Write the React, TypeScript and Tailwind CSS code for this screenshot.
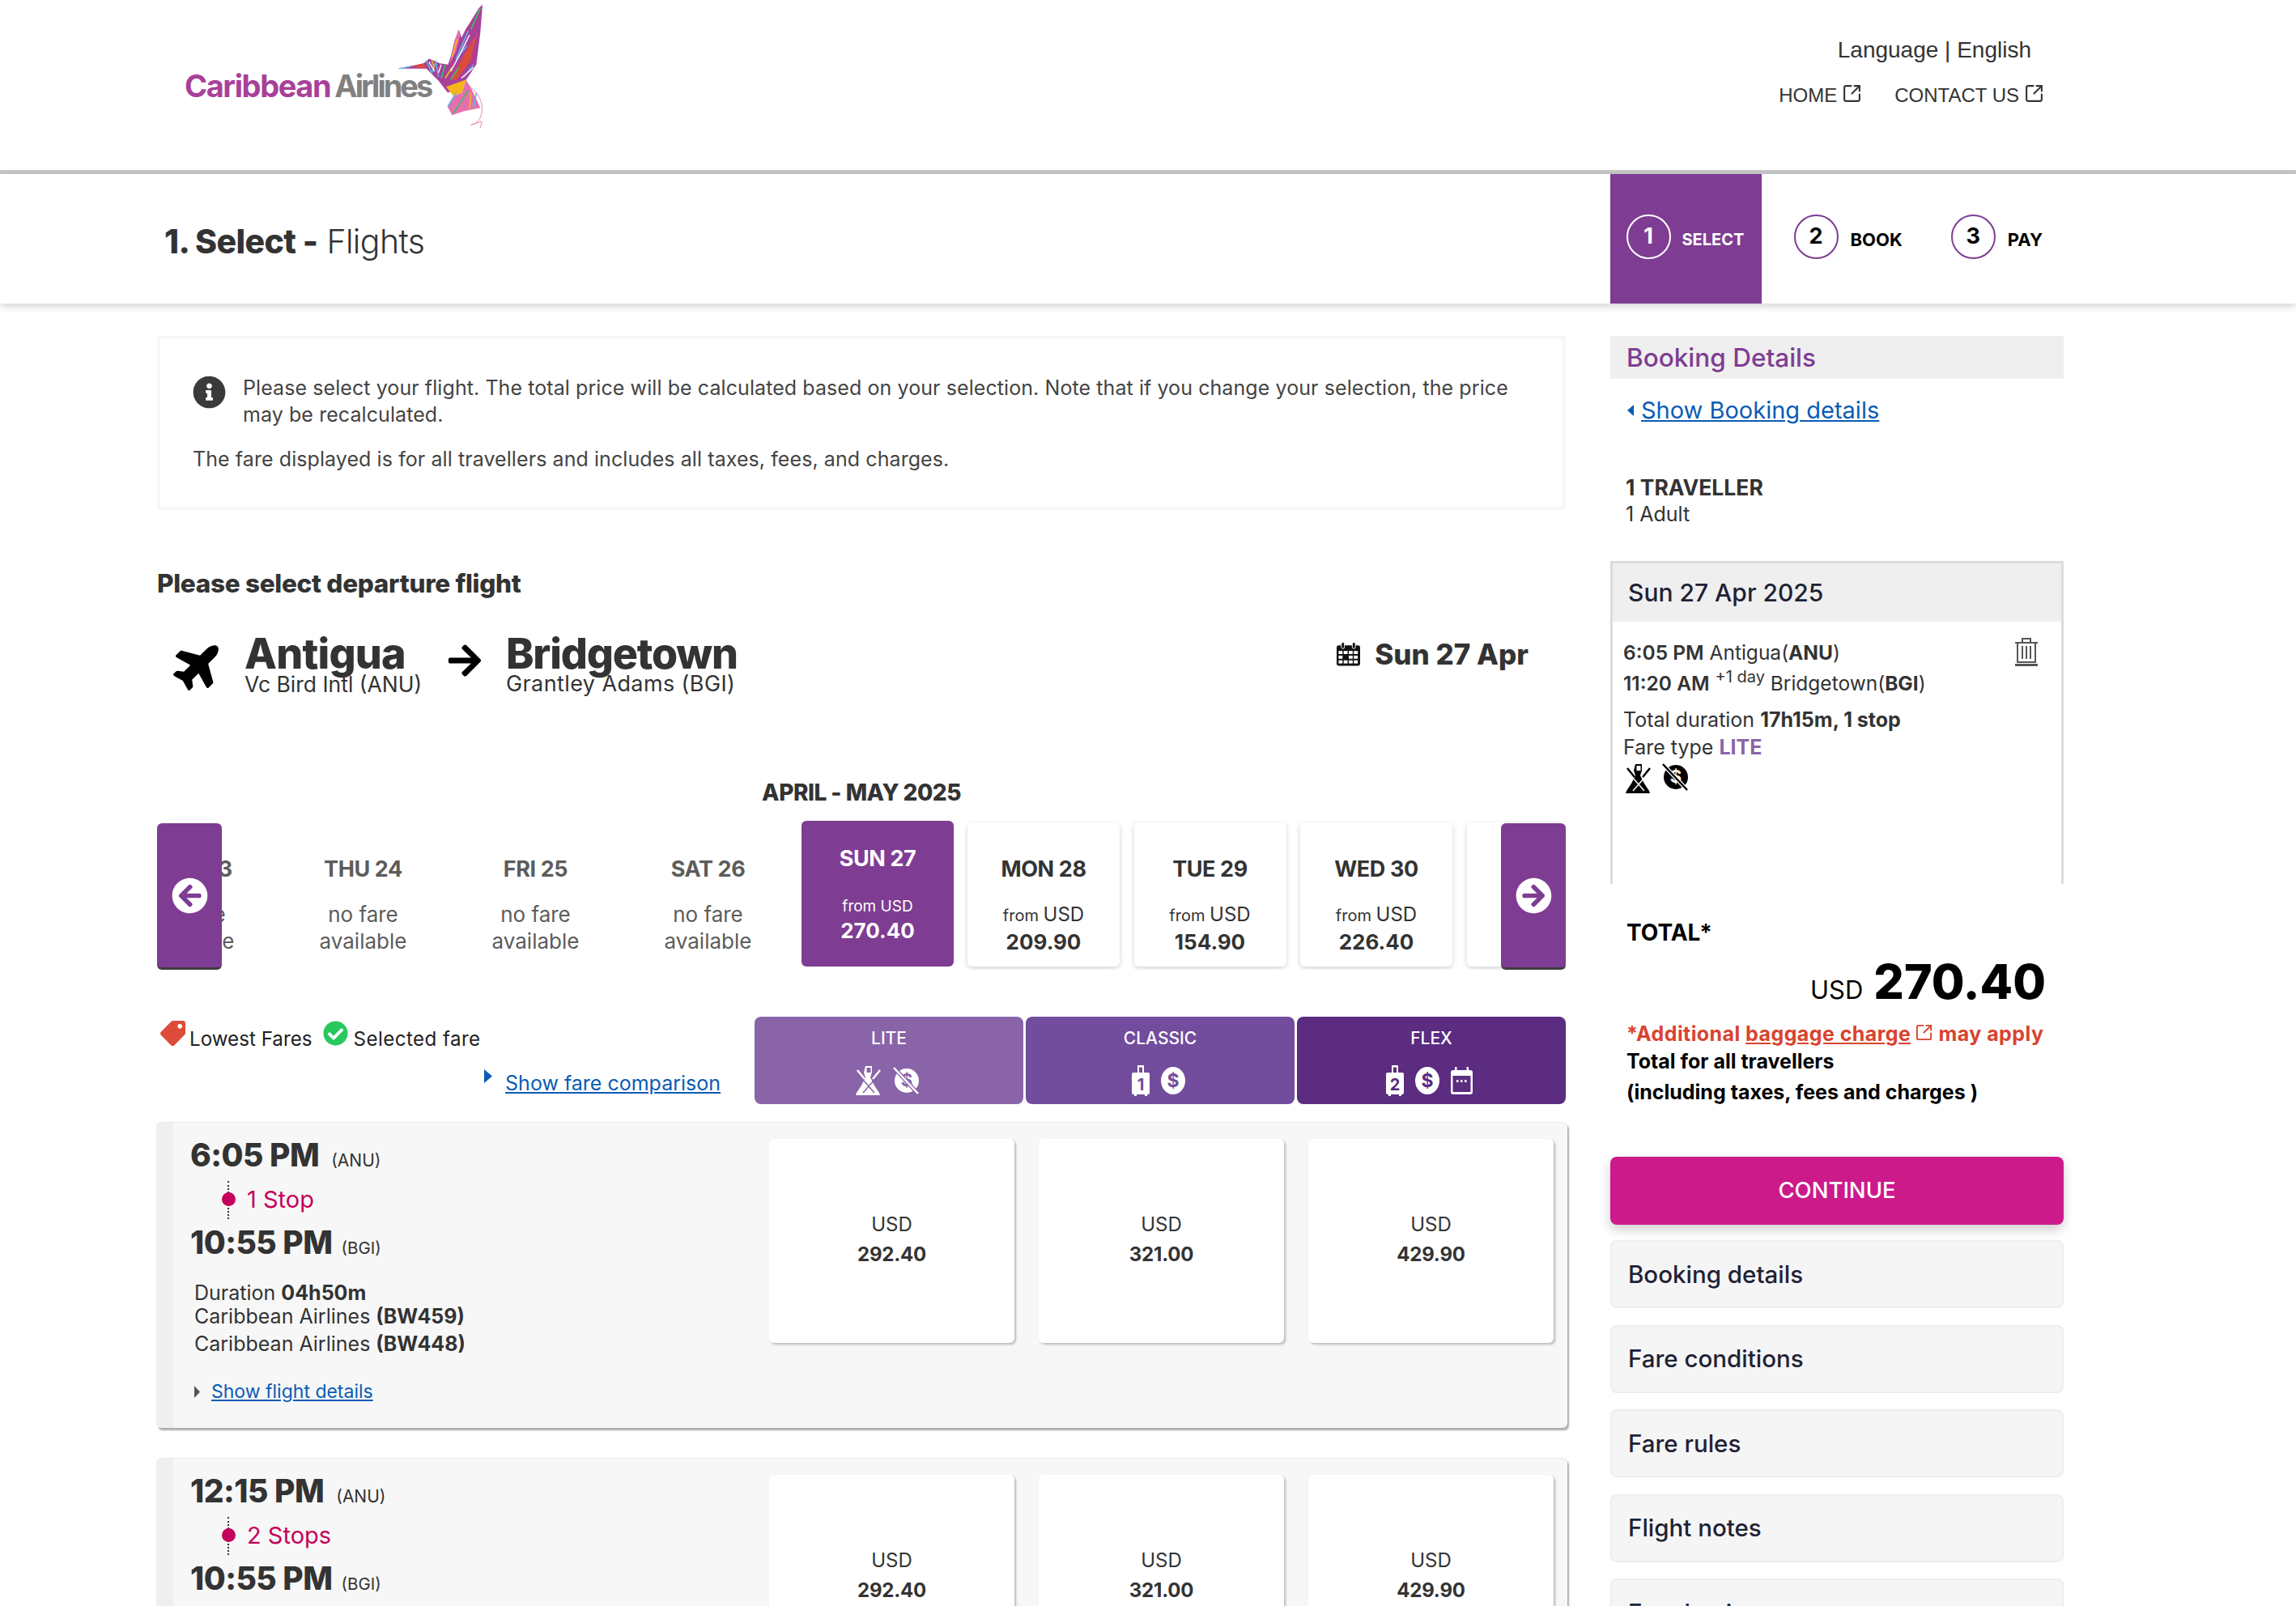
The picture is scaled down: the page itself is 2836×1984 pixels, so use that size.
import React from "react";
import { FaInfoCircle, FaPlane, FaArrowRight, FaArrowCircleLeft, FaArrowCircleRight, FaTag, FaCheckCircle } from "react-icons/fa";
import { SquareArrowOutUpRight } from "lucide-react";

function Bird() {
  return (
    <svg viewBox="930 10 330 470" className="w-[110px] h-[157px] -ml-[42px] mt-[3px] shrink-0">
      <path fill="#a8409a" d="M1248 18L1235 30 1210 70 1185 110 1170 140 1160 110 1145 150 1130 210 1120 240 1090 235 1050 218 1030 235 938 255 1040 255 1085 300 1120 345 1185 300 1225 240 1240 120Z" />
      <path fill="#e56fae" d="M1160 110L1145 150 1125 240 1150 190 1165 130Z" />
      <path fill="#dd4b39" d="M1228 125L1205 225 1150 297 1132 292 1182 200Z" />
      <path fill="#dd4b39" d="M985 246L1030 235 1040 255Z" />
      <path fill="#f4b41a" d="M1113 322L1187 295 1172 345 1140 357Z" />
      <path fill="#e56fae" d="M1187 297L1205 325 1240 400 1180 412 1135 427 1118 395 1140 357 1172 345Z" />
      <path fill="none" stroke="#5fb3e6" strokeWidth="4" d="M938 255L985 246" />
      <path fill="none" stroke="#3fbf5f" strokeWidth="5" d="M1240 30L1205 110M1110 240L1095 290M1195 335L1140 420M1160 250L1130 295" />
      <path fill="none" stroke="#5fb3e6" strokeWidth="5" d="M1195 115L1150 220 1190 170M1040 225L1060 270 1075 230 1085 285M1150 345L1120 395M1225 345L1215 400M1215 240L1180 285" />
      <path fill="none" stroke="#f4b41a" strokeWidth="5" d="M1155 145L1135 210M1110 290L1135 250M1205 345L1200 405M1060 225L1070 255" />
      <path fill="none" stroke="#ffffff" strokeWidth="4" d="M1200 130L1160 210 1130 265M1215 250L1170 290M1050 230L1070 265M1095 240L1085 270" />
      <path fill="none" stroke="#e56fae" strokeWidth="2.5" d="M1205 325C1240 350 1258 400 1238 440 1230 455 1215 462 1205 463L1245 450 1240 475" />
    </svg>
  );
}

function Tri({ left, w, h, c }: { left?: boolean; w: string; h: string; c: string }) {
  return (
    <svg viewBox="0 0 10 17" preserveAspectRatio="none" className={"shrink-0 " + w + " " + h} fill={c}>
      <path d={left ? "M10 0L0 8.5 10 17z" : "M0 0l10 8.5L0 17z"} />
    </svg>
  );
}

function NoBag({ c, k }: { c: string; k: string }) {
  return (
    <svg viewBox="0 0 32 38" className="w-[32px] h-[38px]">
      <path fill={c} d="M12 1h8v8l-2 6 5 10 6 9 1 3H0l1-3 6-9 5-10-2-6z" />
      <rect x="13.5" y="3" width="5" height="6" fill={k} />
      <path stroke={c} strokeWidth="2.5" d="M2 6l9 11M30 6l-9 11" />
      <path stroke={k} strokeWidth="1.5" d="M9 18l14 16M23 18L9 34" />
    </svg>
  );
}
function NoDollar({ c, k }: { c: string; k: string }) {
  return (
    <svg viewBox="0 0 32 34" className="w-[32px] h-[34px]">
      <circle cx="17" cy="17" r="15" fill={c} />
      <text x="17" y="24" textAnchor="middle" fontSize="22" fontWeight="700" fontFamily="Inter,sans-serif" fill={k}>$</text>
      <path stroke={k} strokeWidth="5" d="M1 1l30 32" />
      <path stroke={c} strokeWidth="2.5" d="M1 1l30 32" />
    </svg>
  );
}
function Bag({ c, k, n }: { c: string; k: string; n: string }) {
  return (
    <svg viewBox="0 0 22 38" className="w-[22px] h-[38px]">
      <path fill={c} d="M7 0h8v9h5a2 2 0 0 1 2 2v23a2 2 0 0 1-2 2h-1v2h-3v-2H6v2H3v-2H2a2 2 0 0 1-2-2V11a2 2 0 0 1 2-2h5z" />
      <rect x="9" y="2.5" width="4" height="6.5" fill={k} />
      <text x="11" y="31" textAnchor="middle" fontSize="20" fontWeight="700" fontFamily="Inter,sans-serif" fill={k}>{n}</text>
    </svg>
  );
}
function Dollar({ c, k }: { c: string; k: string }) {
  return (
    <svg viewBox="0 0 30 34" className="w-[30px] h-[34px]">
      <ellipse cx="15" cy="17" rx="15" ry="17" fill={c} />
      <text x="15" y="25" textAnchor="middle" fontSize="23" fontWeight="700" fontFamily="Inter,sans-serif" fill={k}>$</text>
    </svg>
  );
}
function Cal({ c, k }: { c: string; k: string }) {
  return (
    <svg viewBox="0 0 27 34" className="w-[27px] h-[34px]">
      <rect x="0" y="4" width="27" height="30" rx="3" fill={c} />
      <rect x="5" y="0" width="2.5" height="6" fill={c} />
      <rect x="19.5" y="0" width="2.5" height="6" fill={c} />
      <rect x="2.5" y="11" width="22" height="20" fill={k} />
      <rect x="7" y="16" width="2.5" height="3" fill={c} />
      <rect x="12" y="16" width="2.5" height="3" fill={c} />
      <rect x="17" y="16" width="2.5" height="3" fill={c} />
    </svg>
  );
}
function GridCal() {
  return (
    <svg viewBox="0 0 30 30" className="w-[29px] h-[30px]">
      <rect x="0" y="4" width="30" height="26" rx="2.5" fill="#111" />
      <rect x="6" y="0" width="4" height="8" rx="2" fill="#111" stroke="#fff" strokeWidth="1" />
      <rect x="20" y="0" width="4" height="8" rx="2" fill="#111" stroke="#fff" strokeWidth="1" />
      <g fill="#fff">
        <rect x="2.5" y="11" width="5" height="4" /><rect x="9" y="11" width="5" height="4" /><rect x="15.5" y="11" width="5" height="4" /><rect x="22" y="11" width="5" height="4" />
        <rect x="2.5" y="17" width="5" height="4" /><rect x="15.5" y="17" width="5" height="4" /><rect x="22" y="17" width="5" height="4" />
        <rect x="2.5" y="23" width="5" height="4" /><rect x="9" y="23" width="5" height="4" /><rect x="15.5" y="23" width="5" height="4" /><rect x="22" y="23" width="5" height="4" />
      </g>
    </svg>
  );
}
function Trash() {
  return (
    <svg viewBox="0 0 28 36" className="w-[28px] h-[36px]" fill="none" stroke="#555" strokeWidth="2">
      <path d="M0 7h28M9 6V2h10v4M3 7v24h22V7M9 11v16M14 11v16M19 11v16" />
      <path strokeWidth="3" d="M0 34.5h28" />
    </svg>
  );
}

function Step({ n, label, active }: { n: string; label: string; active?: boolean }) {
  return (
    <div className={active ? "w-[187px] h-[160px] bg-[#7e3d92] text-white flex items-start pl-[20px] pt-[50px] gap-[14px]" : "flex items-start pt-[50px] gap-[15px] text-black"}>
      <div className={active ? "w-[55px] h-[55px] rounded-full border-2 border-white flex items-center justify-center text-[27px] font-bold" : "w-[55px] h-[55px] rounded-full border-2 border-[#7e3d92] flex items-center justify-center text-[27px] font-bold"}>{n}</div>
      <div className={active ? "text-[20px] font-bold leading-[55px] mt-[4px]" : "text-[22px] font-bold leading-[55px] mt-[4px]"}>{label}</div>
    </div>
  );
}

function NoFare({ day }: { day: string }) {
  return (
    <div className="w-[213px] shrink-0 text-center text-[#5c5c5c] pt-[40px]">
      <div className="text-[27px] font-bold leading-[40px] tracking-[-0.4px]">{day}</div>
      <div className="text-[26px] leading-[33px] mt-[19px]">no fare<br />available</div>
    </div>
  );
}

function PriceDay({ day, price }: { day: string; price: string }) {
  return (
    <div className="w-[188px] h-[178px] mt-[2px] shrink-0 bg-white rounded-[6px] shadow-[0_2px_6px_rgba(0,0,0,0.18)] text-center text-[#333] pt-[38px]">
      <div className="text-[27px] font-bold leading-[40px] tracking-[-0.4px]">{day}</div>
      <div className="leading-[30px] mt-[21px]"><span className="text-[20px]">from </span><span className="text-[24px]">USD</span></div>
      <div className="text-[26px] font-bold leading-[34px]">{price}</div>
    </div>
  );
}

function FareBox({ price }: { price: string }) {
  return (
    <div className="w-[303px] h-[252px] bg-white rounded-[6px] shadow-[2px_2px_3px_rgba(0,0,0,0.25)] text-center text-[#333] pt-[91px]">
      <div className="text-[24px] leading-[30px]">USD</div>
      <div className="text-[24px] font-bold leading-[36px] mt-[4px] tracking-[-0.2px]">{price}</div>
    </div>
  );
}

function FlightCard({ time, stops, details }: { time: string; stops: string; details?: boolean }) {
  return (
    <div className="w-[1743px] h-[378px] -ml-[1px] shrink-0 flex bg-[#f7f7f7] rounded-[6px] border-t border-[#e8e8e8] shadow-[2px_3px_2px_#adadad] overflow-hidden">
      <div className="w-[21px] bg-[#efefef] shrink-0" />
      <div className="flex-1 pl-[21px] pt-[18px] text-[#333]">
        <div className="flex items-baseline">
          <span className="text-[39px] font-extrabold leading-[44px] tracking-[-0.5px]">{time}</span>
          <span className="text-[21px] ml-[15px]">(ANU)</span>
        </div>
        <div className="relative h-[47px] mt-[9px] pl-[70px] flex items-center text-[29px] leading-[44px] text-[#c4005a]">
          <div className="absolute left-[46px] top-0 h-[47px] border-l-2 border-dotted border-[#333]" />
          <div className="absolute left-[39px] top-[14px] w-[17px] h-[17px] rounded-full bg-[#c4005a]" />
          {stops}
        </div>
        <div className="flex items-baseline mt-[7px]">
          <span className="text-[39px] font-extrabold leading-[44px] tracking-[-0.5px]">10:55 PM</span>
          <span className="text-[20.5px] ml-[11px]">(BGI)</span>
        </div>
        {details && (
          <div className="pl-[5px]">
            <div className="text-[25px] leading-[29px] mt-[26px]">Duration <b>04h50m</b></div>
            <div className="text-[25px] leading-[30px] -mt-[1px]">Caribbean Airlines <b>(BW459)</b></div>
            <div className="text-[25px] leading-[30px] mt-[4px]">Caribbean Airlines <b>(BW448)</b></div>
            <div className="flex items-center mt-[29px] text-[23px] leading-[30px]">
              <Tri w="w-[7px]" h="h-[15px]" c="#555" />
              <span className="text-[#0a5cb5] underline ml-[14px]">Show flight details</span>
            </div>
          </div>
        )}
      </div>
      <div className="flex gap-[30px] pt-[20px] pr-[17px] shrink-0">
        <FareBox price="292.40" />
        <FareBox price="321.00" />
        <FareBox price="429.90" />
      </div>
    </div>
  );
}

function Acc({ label }: { label: string }) {
  return <div className="h-[84px] shrink-0 bg-[#f5f5f5] border-2 border-[#ededed] rounded-[8px] flex items-center pl-[20px] text-[29.5px] font-medium text-[#1e2235]">{label}</div>;
}

export default function App() {
  return (
    <div className="w-[2836px] h-[1984px] overflow-hidden bg-white [font-family:Inter,sans-serif] text-[#333]">
      <header className="h-[215px] border-b-[5px] border-[#c8c8c8] flex justify-between">
        <div className="flex items-start pl-[228px]">
          <div className="mt-[87px] text-[38px] leading-[38px] font-bold tracking-[-1.4px] whitespace-nowrap">
            <span className="text-[#a8409a]">Caribbean</span><span className="text-[#808080] ml-[5px] tracking-[-3px]">Airlines</span>
          </div>
          <Bird />
        </div>
        <div className="[font-family:'Liberation_Sans',sans-serif] pr-[311px] text-[#333] flex flex-col items-end">
          <div className="text-[28px] leading-[34px] mt-[45px] mr-[16px]">Language | English</div>
          <div className="flex mt-[23px] text-[24px] leading-[32px] gap-[40px]">
            <div className="flex items-start gap-[6px]">HOME<SquareArrowOutUpRight className="w-[25px] h-[25px] mt-[1px]" strokeWidth={2} /></div>
            <div className="flex items-start gap-[6px]">CONTACT US<SquareArrowOutUpRight className="w-[25px] h-[25px] mt-[1px]" strokeWidth={2} /></div>
          </div>
        </div>
      </header>

      <div className="h-[160px] flex justify-between pl-[203px] pr-[313px] bg-white shadow-[0_3px_10px_rgba(0,0,0,0.18)] relative">
        <div className="text-[41px] leading-[166px] tracking-[-0.6px]"><b className="font-extrabold">1. Select -</b> <span className="font-light">Flights</span></div>
        <div className="flex items-start">
          <Step n="1" label="SELECT" active />
          <div className="w-[40px]" />
          <Step n="2" label="BOOK" />
          <div className="w-[60px]" />
          <Step n="3" label="PAY" />
        </div>
      </div>

      <main className="flex pl-[194px] pt-[40px]">
        <div className="w-[1740px] shrink-0">
          <div className="h-[215px] border-4 border-[#f7f7f7] pl-[40px] pr-[60px] text-[25px] tracking-[0.08px] text-[#444]">
            <div className="flex mt-[44px]">
              <FaInfoCircle className="w-[41px] h-[41px] text-[#3a3a3a] shrink-0 mt-[1px] mr-[21px]" />
              <div className="leading-[33px] w-[1570px]">Please select your flight. The total price will be calculated based on your selection. Note that if you change your selection, the price may be recalculated.</div>
            </div>
            <div className="leading-[33px] mt-[22px]">The fare displayed is for all travellers and includes all taxes, fees, and charges.</div>
          </div>

          <div className="text-[31.5px] font-extrabold leading-[40px] mt-[71px] tracking-[-0.3px]">Please select departure flight</div>

          <div className="h-[171px] mt-[46px] flex items-start">
            <FaPlane className="w-[64px] h-[64px] text-black -rotate-45 ml-[20px] mt-[2px] shrink-0" />
            <div className="ml-[24px] w-[250px]">
              <div className="text-[52px] font-extrabold leading-[42px] tracking-[-0.8px]">Antigua</div>
              <div className="text-[26.5px] leading-[32px] whitespace-nowrap">Vc Bird Intl (ANU)</div>
            </div>
            <FaArrowRight className="w-[44px] h-[46px] text-black mt-[6px] shrink-0" />
            <div className="ml-[29px] w-[500px]">
              <div className="text-[52px] font-extrabold leading-[42px] tracking-[-1.2px]">Bridgetown</div>
              <div className="text-[27px] leading-[32px] tracking-[0.4px] whitespace-nowrap">Grantley Adams (BGI)</div>
            </div>
            <div className="flex items-center ml-auto mr-[46px] mt-[1px] gap-[18px]">
              <GridCal />
              <div className="text-[35px] font-extrabold leading-[40px] whitespace-nowrap">Sun 27 Apr</div>
            </div>
          </div>

          <div className="text-center text-[28px] font-extrabold leading-[40px] tracking-[-0.5px] pt-[1px]">APRIL - MAY 2025</div>

          <div className="relative h-[184px] mt-[15px] overflow-hidden">
            <div className="flex -ml-[65px] h-[184px]">
              <NoFare day="WED 23" />
              <NoFare day="THU 24" />
              <NoFare day="FRI 25" />
              <NoFare day="SAT 26" />
              <div className="w-[188px] h-[180px] ml-[9px] shrink-0 bg-[#7e3d92] rounded-[6px] text-center text-white pt-[27px]">
                <div className="text-[27px] font-bold leading-[40px] tracking-[-0.4px]">SUN 27</div>
                <div className="text-[19px] leading-[30px] mt-[24px]">from USD</div>
                <div className="text-[26px] font-bold leading-[30px]">270.40</div>
              </div>
              <div className="flex shrink-0 gap-[17.5px] ml-[17px] pb-[6px]">
                <PriceDay day="MON 28" price="209.90" />
                <PriceDay day="TUE 29" price="154.90" />
                <PriceDay day="WED 30" price="226.40" />
                <PriceDay day="THU 1" price="" />
              </div>
            </div>
            <div className="absolute left-0 top-[3px] w-[80px] h-[181px] bg-[#7e3d92] rounded-[6px] border-b-[3px] border-[#3d3d3d] flex items-center justify-center">
              <FaArrowCircleLeft className="w-[45px] h-[45px] text-white" />
            </div>
            <div className="absolute right-0 top-[3px] w-[80px] h-[181px] bg-[#7e3d92] rounded-[6px] border-b-[3px] border-[#3d3d3d] flex items-center justify-center">
              <FaArrowCircleRight className="w-[45px] h-[45px] text-white" />
            </div>
          </div>

          <div className="flex mt-[58px] h-[108px]">
            <div className="w-[738px] shrink-0 text-[24.2px] text-[#222]">
              <div className="flex items-start pl-[4px] pt-[5px]">
                <FaTag className="w-[31px] h-[31px] text-[#dd4b39] -scale-x-100 shrink-0" />
                <span className="ml-[5px] mt-[8px] leading-[30px]">Lowest Fares</span>
                <FaCheckCircle className="w-[31px] h-[31px] text-[#27c95f] ml-[13px] shrink-0" />
                <span className="ml-[7px] mt-[8px] leading-[30px] tracking-[0.4px]">Selected fare</span>
              </div>
              <div className="flex justify-end items-start pr-[42px] mt-[22px] leading-[34px] text-[25px]">
                <Tri w="w-[10px]" h="h-[17px]" c="#0a5cb5" />
                <span className="text-[#0a5cb5] underline ml-[16px]">Show fare comparison</span>
              </div>
            </div>
            <div className="flex-1 flex gap-[3px]">
              {[
                { l: "LITE", bg: "bg-[#8964a9]", k: "#8964a9" },
                { l: "CLASSIC", bg: "bg-[#724c9d]", k: "#724c9d" },
                { l: "FLEX", bg: "bg-[#5b2c80]", k: "#5b2c80" },
              ].map((f) => (
                <div key={f.l} className={"flex-1 rounded-[8px] text-white text-center pt-[14px] " + f.bg}>
                  <div className="text-[21px] font-medium leading-[26px]">{f.l}</div>
                  <div className="flex justify-center items-center gap-[14px] mt-[20px] h-[38px] pr-[5px]">
                    {f.l === "LITE" && <><NoBag c="#fff" k={f.k} /><NoDollar c="#fff" k={f.k} /></>}
                    {f.l === "CLASSIC" && <><Bag c="#fff" k={f.k} n="1" /><Dollar c="#fff" k={f.k} /></>}
                    {f.l === "FLEX" && <><Bag c="#fff" k={f.k} n="2" /><Dollar c="#fff" k={f.k} /><Cal c="#fff" k={f.k} /></>}
                  </div>
                </div>
              ))}
            </div>
          </div>

          <div className="mt-[22px] flex flex-col gap-[37px]">
            <FlightCard time="6:05 PM" stops="1 Stop" details />
            <FlightCard time="12:15 PM" stops="2 Stops" />
          </div>
        </div>

        <aside className="w-[560px] ml-[55px] shrink-0">
          <div className="h-[53px] bg-[#efefef] pl-[20px] text-[31.5px] font-medium leading-[53px] text-[#7e3d92]">Booking Details</div>
          <div className="flex items-center pl-[21px] mt-[21px] text-[29px] leading-[36px]">
            <Tri left w="w-[8px]" h="h-[14px]" c="#0a5cb5" />
            <span className="text-[#0a5cb5] underline ml-[9px]">Show Booking details</span>
          </div>
          <div className="pl-[19px] mt-[59px] text-[26.5px] font-bold leading-[36px] text-[#333]">1 TRAVELLER</div>
          <div className="pl-[19px] text-[25px] leading-[30px]">1 Adult</div>

          <div className="mt-[43px] h-[399px] border-[3px] border-b-0 border-[#dcdcdc]">
            <div className="h-[72px] bg-[#efefef] pl-[19px] text-[30px] font-medium leading-[72px] text-[#1e2235]">Sun 27 Apr 2025</div>
            <div className="flex justify-between pl-[13px] pr-[29px] pt-[19px] text-[24.5px]">
              <div>
                <div className="leading-[38px]"><b className="font-semibold">6:05 PM</b> Antigua(<b>ANU</b>)</div>
                <div className="leading-[38px]"><b className="font-semibold">11:20 AM</b> <sup className="text-[20px]">+1 day</sup> Bridgetown(<b>BGI</b>)</div>
                <div className="leading-[34px] mt-[9px] text-[25px]">Total duration <b>17h15m, 1 stop</b></div>
                <div className="leading-[34px] text-[25px]">Fare type <b className="text-[#8964a9]">LITE</b></div>
                <div className="flex gap-[13px] h-[40px] mt-[3px] ml-[3px]">
                  <NoBag c="#000" k="#fff" />
                  <NoDollar c="#000" k="#fff" />
                </div>
              </div>
              <Trash />
            </div>
          </div>

          <div className="pl-[20px] mt-[43px] text-[28px] font-bold leading-[34px] text-black">TOTAL*</div>
          <div className="flex justify-end items-baseline pr-[22px] mt-[9px] text-black">
            <span className="text-[31px] mr-[13px]">USD</span>
            <span className="text-[59px] font-extrabold leading-[70px]">270.40</span>
          </div>
          <div className="pl-[20px] mt-[12px] text-[25px] font-bold leading-[34px] text-black whitespace-nowrap">
            <div className="text-[#d9432f] tracking-[0.42px] flex items-center"><span>*Additional&nbsp;</span><span className="underline flex items-center">baggage charge<SquareArrowOutUpRight className="w-[23px] h-[23px] ml-[5px] -mt-[4px]" strokeWidth={2} /></span><span>&nbsp;may apply</span></div>
            <div>Total for all travellers</div>
            <div className="leading-[42px]">(including taxes, fees and charges )</div>
          </div>

          <div className="mt-[59px] h-[84px] bg-[#cc1a8b] rounded-[8px] shadow-[0_6px_14px_rgba(0,0,0,0.2)] flex items-center justify-center text-white text-[27.5px] font-medium">CONTINUE</div>
          <div className="flex flex-col gap-[20.5px] mt-[19px]">
            <Acc label="Booking details" />
            <Acc label="Fare conditions" />
            <Acc label="Fare rules" />
            <Acc label="Flight notes" />
            <Acc label="Fare basis" />
          </div>
        </aside>
      </main>
    </div>
  );
}
